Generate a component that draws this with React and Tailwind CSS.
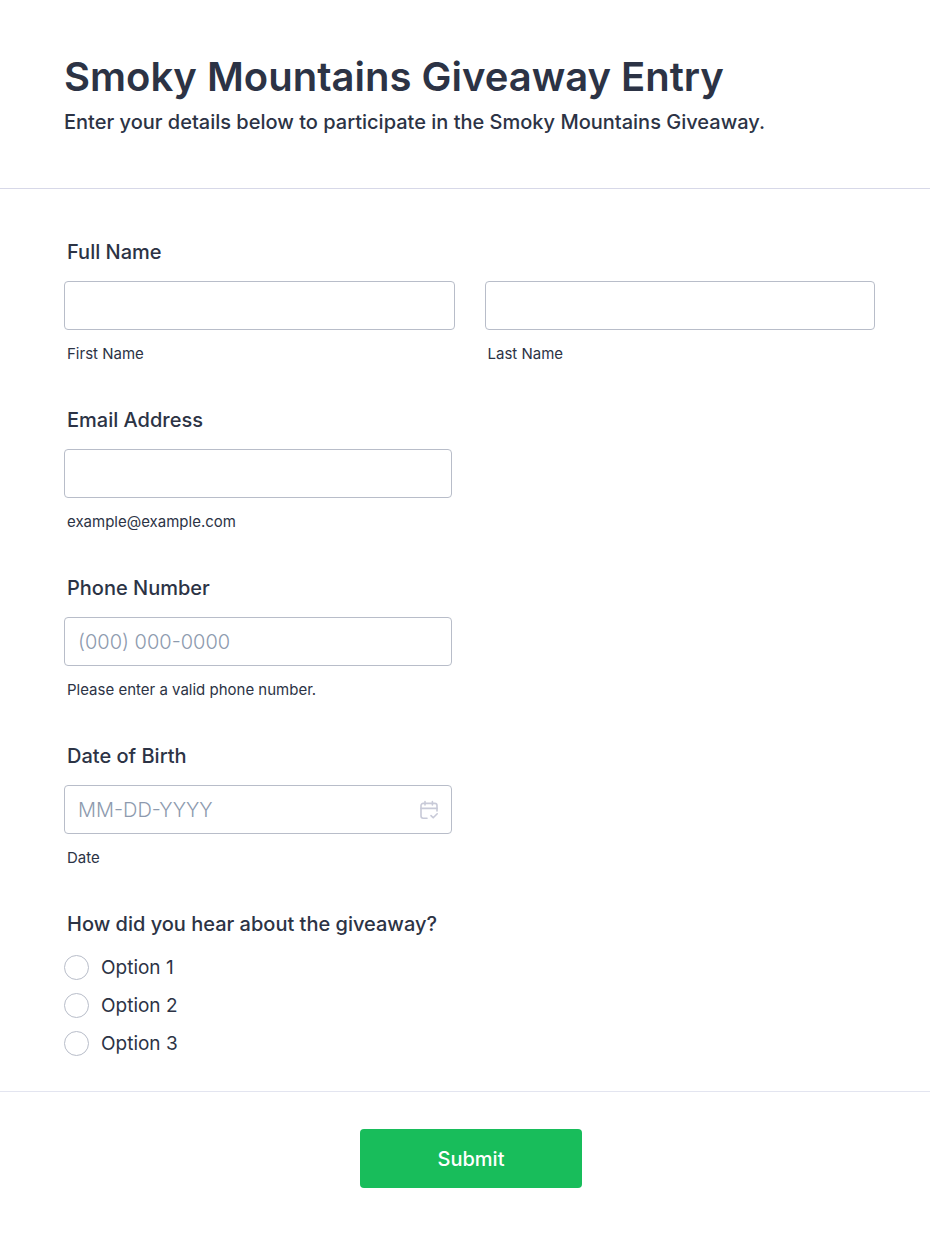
import clsx from "clsx";

const options = ["Option 1", "Option 2", "Option 3"];

const labelClass = "block px-[3px] text-[20px] leading-6 font-medium";
const inputClass =
  "block w-full h-[49px] rounded-sm border border-[#b8bdc9] bg-white px-[13px] text-[20px] font-light outline-none placeholder:text-[#8d9aae] placeholder:opacity-100 focus:border-blue-500";

function CalendarIcon({ className }) {
  return (
    <svg viewBox="0 0 20 20" fill="none" stroke="currentColor" strokeWidth="1.6" strokeLinecap="round" strokeLinejoin="round" className={className} aria-hidden="true">
      <path d="M8 18.2H4.2a2.2 2.2 0 0 1-2.2-2.2V5.6a2.2 2.2 0 0 1 2.2-2.2h11.6A2.2 2.2 0 0 1 18 5.6V11" />
      <path d="M2 8.4h16M6 1.6v3.4M13.4 1.6v3.4" />
      <path d="M12 15.6l2.2 2.2 4-4" />
    </svg>
  );
}

function TextInput({ id, hint, children, ...props }) {
  return (
    <div>
      <div className="relative">
        <input id={id} name={id} aria-describedby={`${id}-hint`} className={inputClass} {...props} />
        {children}
      </div>
      <label id={`${id}-hint`} htmlFor={id} className="block mt-[14px] px-[3px] text-[15px] leading-5">
        {hint}
      </label>
    </div>
  );
}

function Field({ label, id, ...props }) {
  return (
    <div className="max-w-[388px]">
      <label htmlFor={id} className={clsx(labelClass, "mb-[17px]")}>
        {label}
      </label>
      <TextInput id={id} {...props} />
    </div>
  );
}

export default function App() {
  return (
    <form
      onSubmit={(e) => e.preventDefault()}
      className="min-h-screen bg-white font-['Inter',sans-serif] text-[#2c3345]"
    >
      <header className="border-b border-[#d7d8e8] pt-[52px] pb-[54px] pl-16 pr-[55px]">
        <h1 className="text-[40px] leading-[50px] font-semibold">Smoky Mountains Giveaway Entry</h1>
        <p className="mt-2 text-[20px] leading-6 font-medium">
          Enter your details below to participate in the Smoky Mountains Giveaway.
        </p>
      </header>

      <div className="flex flex-col gap-[44px] pt-[51px] pb-[35px] pl-16 pr-[55px]">
        <fieldset>
          <legend className={clsx(labelClass, "mb-[17px]")}>Full Name</legend>
          <div className="grid grid-cols-2 gap-[30px]">
            <TextInput id="firstName" type="text" hint="First Name" />
            <TextInput id="lastName" type="text" hint="Last Name" />
          </div>
        </fieldset>

        <Field id="email" label="Email Address" type="email" hint="example@example.com" />
        <Field id="phone" label="Phone Number" type="tel" placeholder="(000) 000-0000" hint="Please enter a valid phone number." />
        <Field id="birthDate" label="Date of Birth" type="text" placeholder="MM-DD-YYYY" hint="Date">
          <button type="button" aria-label="Choose date" className="absolute inset-y-0 right-[13px] flex items-center text-[#c8cad8]">
            <CalendarIcon className="size-5" />
          </button>
        </Field>

        <fieldset>
          <legend className={clsx(labelClass, "mb-[19px]")}>How did you hear about the giveaway?</legend>
          <div className="flex flex-col gap-[13px]">
            {options.map((option) => (
              <label key={option} className="flex items-center gap-3 text-[19px] leading-[25px]">
                <input
                  type="radio"
                  name="source"
                  value={option}
                  className="size-[25px] shrink-0 appearance-none rounded-full border border-[#b8bdc9] bg-white checked:border-8 checked:border-blue-500"
                />
                {option}
              </label>
            ))}
          </div>
        </fieldset>
      </div>

      <div className="flex justify-center border-t border-[#e3e5f0] pt-[37px] pb-[49px] pl-16 pr-13">
        <button type="submit" className="h-[59px] w-[222px] rounded-sm bg-[#18bd5b] text-[20px] font-medium text-white hover:bg-[#16aa52]">
          Submit
        </button>
      </div>
    </form>
  );
}
